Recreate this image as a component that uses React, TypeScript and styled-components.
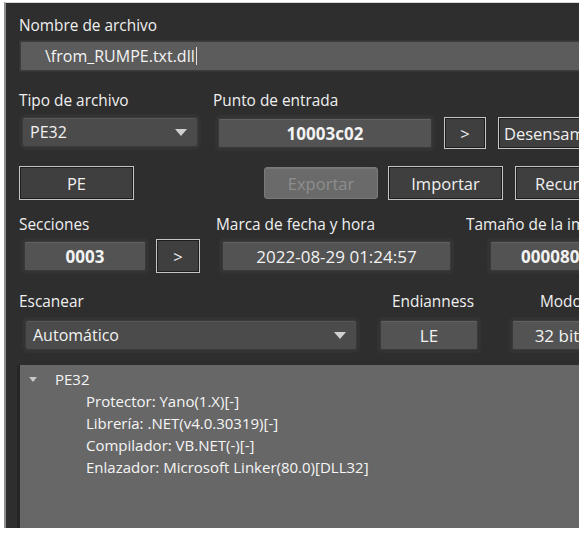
import React from "react";
import styled, { createGlobalStyle, css } from "styled-components";

const Global = createGlobalStyle`
  html, body { margin: 0; padding: 0; background: #ffffff; }
  body { font-family: "Open Sans", "Liberation Sans", Arial, sans-serif; }
  * { box-sizing: border-box; }
`;

const Window = styled.div`
  margin: 2px 0 0 4px;
  width: 575px;
  height: 526px;
  background: #2e2e2e;
  border-left: 2px solid #8e8e8e;
  border-top: 1px solid #d8d8d8;
  overflow: hidden;
  padding: 14px 0 0 13px;
  color: #e6e6e6;
  font-size: 15px;
  display: flex;
  flex-direction: column;
`;

const Label = styled.div<{ $indent?: number }>`
  height: 18px;
  line-height: 18px;
  white-space: nowrap;
  color: #f0f0f0;
  font-size: 15.4px;
  padding-left: ${(p) => p.$indent ?? 0}px;
`;

const TextInput = styled.div`
  margin: 6px 0 0 1px;
  width: 580px;
  height: 30px;
  background: #5c5c5c;
  border: 1px solid #3c3c3c;
  box-shadow: 0 0 0 1px #353535;
  display: flex;
  align-items: center;
  padding-left: 24px;
  white-space: nowrap;
  font-size: 16px;
  color: #f4f4f4;
`;

const Caret = styled.span`
  display: inline-block;
  width: 1px;
  height: 18px;
  background: #e0e0e0;
  margin-left: 1px;
`;

const Row = styled.div<{ $top: number }>`
  display: flex;
  margin-top: ${(p) => p.$top}px;
  white-space: nowrap;
`;

const Col = styled.div<{ $w: number }>`
  flex: none;
  width: ${(p) => p.$w}px;
  display: flex;
  flex-direction: column;
`;

const Controls = styled.div<{ $top?: number; $gap?: number; $left?: number }>`
  display: flex;
  align-items: center;
  gap: ${(p) => p.$gap ?? 12}px;
  margin-top: ${(p) => p.$top ?? 6}px;
  padding-left: ${(p) => p.$left ?? 0}px;
`;

const Combo = styled.div<{ $w: number }>`
  width: ${(p) => p.$w}px;
  height: 30px;
  background: #4b4b4b;
  border: 1px solid #3a3a3a;
  border-radius: 3px;
  box-shadow: 0 0 0 3px #333333, inset 0 1px 0 #575757;
  display: flex;
  align-items: center;
  justify-content: space-between;
  padding: 0 10px 0 7px;
  font-size: 16px;
  color: #f2f2f2;
`;

const Arrow = styled.span`
  width: 0;
  height: 0;
  border-left: 6px solid transparent;
  border-right: 6px solid transparent;
  border-top: 7px solid #d0d0d0;
`;

const Field = styled.div<{ $w: number; $bold?: boolean }>`
  width: ${(p) => p.$w}px;
  height: 30px;
  background: #535353;
  border: 1px solid #3a3a3a;
  border-radius: 2px;
  box-shadow: 0 0 0 3px #333333, inset 0 1px 0 #626262;
  display: flex;
  align-items: center;
  justify-content: center;
  font-size: 17px;
  font-weight: ${(p) => (p.$bold ? 700 : 400)};
  color: #f2f2f2;
  flex: none;
`;

const Button = styled.div<{ $w: number; $h?: number; $disabled?: boolean; $align?: string }>`
  flex: none;
  width: ${(p) => p.$w}px;
  height: ${(p) => p.$h ?? 32}px;
  display: flex;
  align-items: center;
  justify-content: ${(p) => p.$align ?? "center"};
  padding-left: ${(p) => (p.$align ? "5px" : "0")};
  background: #3f3f3f;
  border: 1px solid #c4c4c4;
  box-shadow: inset 0 0 0 1px #1e1e1e;
  font-size: 16.5px;
  color: #f0f0f0;
  ${(p) =>
    p.$disabled &&
    css`
      background: #6a6a6a;
      border-color: #7a7a7a;
      box-shadow: inset 0 1px 0 #777;
      border-radius: 3px;
      color: #8e8e8e;
    `}
`;

const Tree = styled.div`
  margin: 15px 0 0 -2px;
  flex: 1;
  background: #676767;
  border-left: 3px solid #262626;
  padding: 3px 0 0 9px;
  color: #f5f5f5;
`;

const TreeRow = styled.div<{ $indent: number }>`
  height: 22px;
  line-height: 22px;
  padding-left: ${(p) => p.$indent}px;
  display: flex;
  align-items: center;
  white-space: nowrap;
`;

const TreeArrow = styled.span`
  width: 0;
  height: 0;
  border-left: 4px solid transparent;
  border-right: 4px solid transparent;
  border-top: 5px solid #c8c8c8;
  margin-right: 18px;
`;

export default function App() {
  const items = [
    "Protector: Yano(1.X)[-]",
    "Librería: .NET(v4.0.30319)[-]",
    "Compilador: VB.NET(-)[-]",
    "Enlazador: Microsoft Linker(80.0)[DLL32]",
  ];
  return (
    <>
      <Global />
      <Window>
        <Label>Nombre de archivo</Label>
        <TextInput>
          \from_RUMPE.txt.dll
          <Caret />
        </TextInput>

        <Row $top={21}>
          <Col $w={194}>
            <Label>Tipo de archivo</Label>
            <Controls $top={7} $left={3}>
              <Combo $w={176}>
                PE32
                <Arrow />
              </Combo>
            </Controls>
          </Col>
          <Col $w={420}>
            <Label>Punto de entrada</Label>
            <Controls $top={7} $left={5}>
              <Field $w={214} $bold>
                10003c02
              </Field>
              <Button $w={42}>&gt;</Button>
              <Button $w={110} $align="flex-start">
                Desensamblador
              </Button>
            </Controls>
          </Col>
        </Row>

        <Controls $top={17} $gap={0}>
          <Button $w={115} $h={34}>
            PE
          </Button>
          <Button $w={114} $disabled style={{ marginLeft: 130 }}>
            Exportar
          </Button>
          <Button $w={115} $h={34} style={{ marginLeft: 10 }}>
            Importar
          </Button>
          <Button $w={110} $h={34} style={{ marginLeft: 12 }}>
            Recursos
          </Button>
        </Controls>

        <Row $top={16}>
          <Col $w={197}>
            <Label>Secciones</Label>
            <Controls $top={5} $left={5} $gap={10}>
              <Field $w={122} $bold>
                0003
              </Field>
              <Button $w={44} $h={34}>
                &gt;
              </Button>
            </Controls>
          </Col>
          <Col $w={250}>
            <Label>Marca de fecha y hora</Label>
            <Controls $top={7} $left={6}>
              <Field $w={229}>2022-08-29 01:24:57</Field>
            </Controls>
          </Col>
          <Col $w={200}>
            <Label>Tamaño de la imagen</Label>
            <Controls $top={7} $left={24}>
              <Field $w={140} $bold>
                00008000
              </Field>
            </Controls>
          </Col>
        </Row>

        <Row $top={20}>
          <Col $w={360}>
            <Label>Escanear</Label>
            <Controls $top={9} $left={6}>
              <Combo $w={332}>
                Automático
                <Arrow />
              </Combo>
            </Controls>
          </Col>
          <Col $w={132}>
            <Label $indent={13}>Endianness</Label>
            <Controls $top={9} $left={1}>
              <Field $w={98}>LE</Field>
            </Controls>
          </Col>
          <Col $w={120}>
            <Label $indent={29}>Modo</Label>
            <Controls $top={9} $left={1}>
              <Field $w={98}>32 bits</Field>
            </Controls>
          </Col>
        </Row>

        <Tree>
          <TreeRow $indent={0}>
            <TreeArrow />
            PE32
          </TreeRow>
          {items.map((t) => (
            <TreeRow key={t} $indent={57}>
              {t}
            </TreeRow>
          ))}
        </Tree>
      </Window>
    </>
  );
}
